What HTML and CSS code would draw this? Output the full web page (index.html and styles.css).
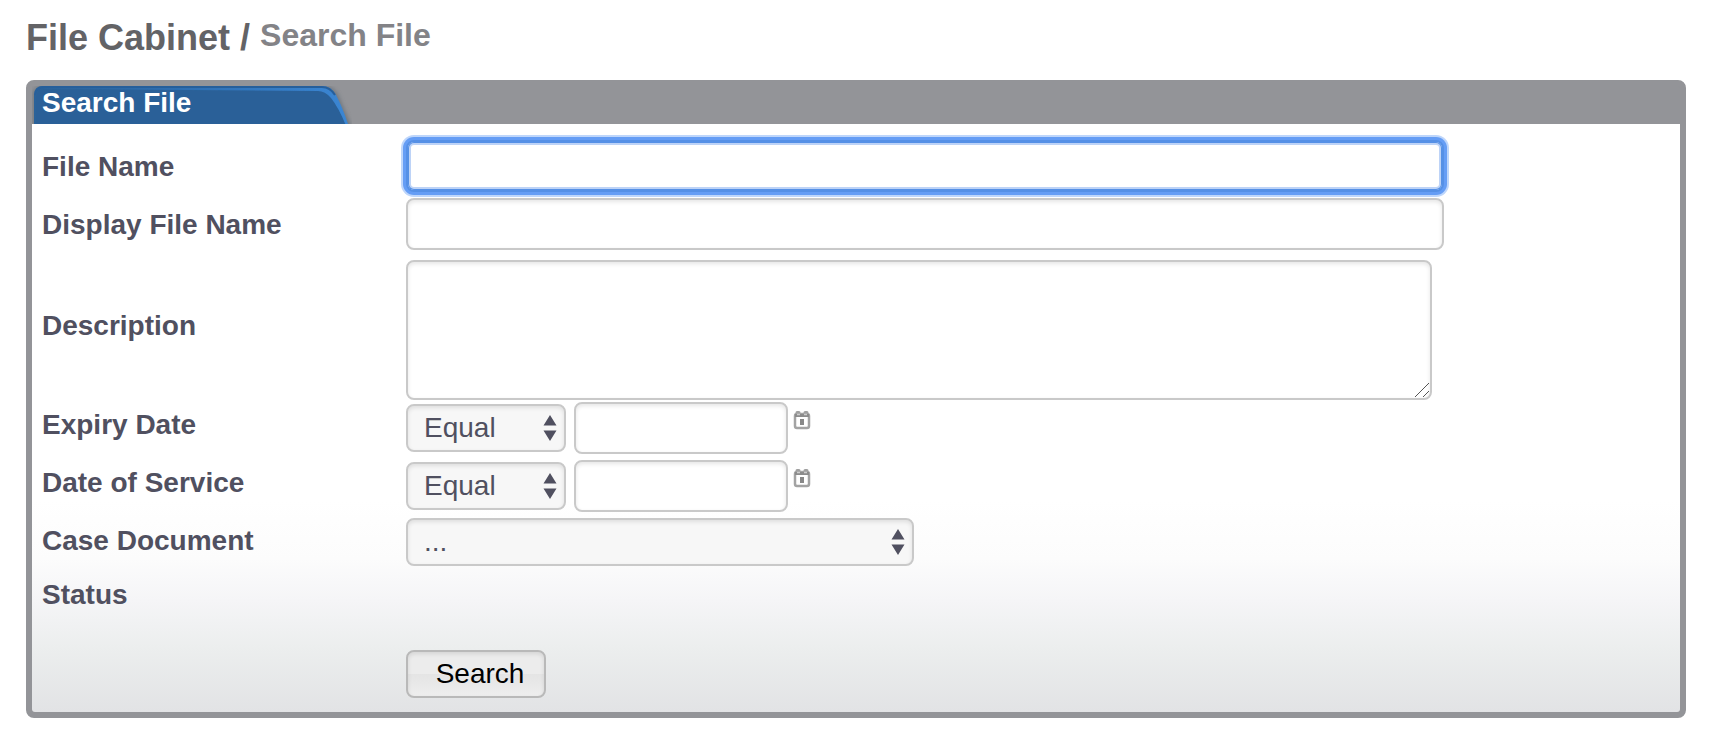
FILE: index.html
```html
<!DOCTYPE html>
<html lang="en">
<head>
  <meta charset="UTF-8" />
  <title>File Cabinet - Search File</title>
  <link rel="stylesheet" href="styles.css">
</head>

<body>
  <h1 class="page-title">File Cabinet / <span class="sub">Search File</span></h1>

  <div class="panel">
    <div class="panel-head">
      <svg class="tab-bg" width="320" height="38" viewBox="0 0 320 38">
        <defs>
          <linearGradient id="edge" x1="0" x2="1" y1="0" y2="0">
            <stop offset="0" stop-color="#2a6299" />
            <stop offset="0.5" stop-color="#2f70b4" />
            <stop offset="1" stop-color="#3b86d3" />
          </linearGradient>
          <filter id="soft" x="-5%" y="-20%" width="110%" height="140%">
            <feGaussianBlur stdDeviation="2" />
          </filter>
          <filter id="smooth" x="-5%" y="-20%" width="110%" height="140%">
            <feGaussianBlur stdDeviation="0.6" />
          </filter>
        </defs>
        <path d="M1 42V9Q1 0 10 0H292Q301 0 306 9L320 42Z" fill="#5f6972" opacity="0.7" filter="url(#soft)" />
        <path d="M2 38V9Q2 0 11 0H290Q299 0 304 9Q310 20 316 38Z" fill="url(#edge)" />
        <path d="M3 9Q4 1 12 1H290Q298 1 303 9" fill="none" stroke="#275f9b" stroke-width="2" filter="url(#smooth)" />
        <path d="M4 42V10Q4 3 12 3L286 5Q293 5 299 12Q307 22 315 42Z" fill="#2a6198" filter="url(#smooth)" />
      </svg>
      <h2 class="tab-title">Search File</h2>
    </div>

    <form class="panel-body">
      <div class="row">
        <label for="fileName">File Name</label>
        <input type="text" id="fileName" class="field wide active" />
      </div>

      <div class="row">
        <label for="displayName">Display File Name</label>
        <input type="text" id="displayName" class="field wide" />
      </div>

      <div class="row row-text">
        <label for="description">Description</label>
        <textarea id="description" class="field"></textarea>
      </div>

      <div class="row row-date">
        <label for="expiryDate">Expiry Date</label>
        <div class="controls">
          <span class="select">
            <select aria-label="Expiry date comparison">
              <option>Equal</option>
              <option>Before</option>
              <option>After</option>
            </select>
            <svg width="14" height="28" viewBox="0 0 14 28"><path d="M7 1L13.500 11.500H0.500ZM0.500 16.500H13.500L7 27Z" /></svg>
          </span>
          <input type="text" id="expiryDate" class="field date" />
          <button type="button" class="calendar" aria-label="Pick expiry date">
            <svg width="18" height="20" viewBox="0 0 18 20">
              <rect x="2" y="4" width="14" height="14" rx="2" fill="#fff" stroke="#a3a3a3" stroke-width="2.500" />
              <path d="M2 5.500H16" stroke="#8c8c8c" stroke-width="3" />
              <path d="M4 2.500H6M12 2.500H14" stroke="#a0a0a0" stroke-width="3" stroke-linecap="round" />
              <path d="M4 4.500H7M11 4.500H14" stroke="#ccc" stroke-width="1.500" />
              <rect x="7" y="9" width="4" height="6" fill="#888" />
            </svg>
          </button>
        </div>
      </div>

      <div class="row row-date">
        <label for="serviceDate">Date of Service</label>
        <div class="controls">
          <span class="select">
            <select aria-label="Date of service comparison">
              <option>Equal</option>
              <option>Before</option>
              <option>After</option>
            </select>
            <svg width="14" height="28" viewBox="0 0 14 28"><path d="M7 1L13.500 11.500H0.500ZM0.500 16.500H13.500L7 27Z" /></svg>
          </span>
          <input type="text" id="serviceDate" class="field date" />
          <button type="button" class="calendar" aria-label="Pick date of service">
            <svg width="18" height="20" viewBox="0 0 18 20">
              <rect x="2" y="4" width="14" height="14" rx="2" fill="#fff" stroke="#a3a3a3" stroke-width="2.500" />
              <path d="M2 5.500H16" stroke="#8c8c8c" stroke-width="3" />
              <path d="M4 2.500H6M12 2.500H14" stroke="#a0a0a0" stroke-width="3" stroke-linecap="round" />
              <path d="M4 4.500H7M11 4.500H14" stroke="#ccc" stroke-width="1.500" />
              <rect x="7" y="9" width="4" height="6" fill="#888" />
            </svg>
          </button>
        </div>
      </div>

      <div class="row row-case">
        <label for="caseDocument">Case Document</label>
        <span class="select select-wide">
          <select id="caseDocument">
            <option>...</option>
          </select>
          <svg width="14" height="28" viewBox="0 0 14 28"><path d="M7 1L13.500 11.500H0.500ZM0.500 16.500H13.500L7 27Z" /></svg>
        </span>
      </div>

      <div class="row row-status">
        <span class="label">Status</span>
      </div>

      <div class="row row-submit">
        <button type="submit" class="search">Search</button>
      </div>
    </form>
  </div>
</body>
</html>
```

FILE: styles.css
```css
* {
  box-sizing: border-box;
}

body {
  margin: 0;
  padding: 16px 28px 34px 26px;
  background: #fff;
  color: #505060;
  font-family: Arial, "Liberation Sans", sans-serif;
  font-size: 28px;
  line-height: 32px;
}

.page-title {
  display: flex;
  gap: 10px;
  height: 64px;
  margin: 0;
  color: #636366;
  font-size: 36px;
  line-height: 44px;
}

.page-title .sub {
  color: #838387;
  font-size: 32px;
  line-height: 38px;
}

.panel {
  border: 6px solid #939498;
  border-radius: 8px;
  background: #939498;
}

.panel-head {
  position: relative;
  height: 38px;
}

.tab-bg {
  position: absolute;
  top: 0;
  left: 0;
}

.tab-title {
  position: relative;
  margin: 0;
  padding-left: 10px;
  color: #fff;
  font-size: 28px;
  line-height: 34px;
}

.panel-body {
  padding: 13px 236px 14px 10px;
  border-radius: 0 0 3px 3px;
  background: linear-gradient(#fff 64%, #fcfcfc 74%, #f5f5f7 81%, #eceeee 89%, #e2e3e5 100%);
}

.row {
  display: grid;
  grid-template-columns: 364px 1fr;
  align-items: center;
  min-height: 58px;
}

label,
.label {
  padding-top: 2px;
  font-weight: bold;
}

.field,
select,
.search {
  margin: 0;
  border: 2px solid #c9c9c9;
  border-radius: 8px;
  box-shadow: inset 0 2px 4px rgba(0, 0, 0, 0.1);
  font: inherit;
}

.field {
  height: 52px;
  padding: 0 8px;
  background: #fff;
  color: #505060;
  outline: none;
}

.wide {
  width: 100%;
}

.active {
  border-color: #5590e6;
  box-shadow: inset 0 0 0 1px #5590e6, inset 0 0 0 3px #bdd3f7, 0 0 0 3px #659df5, 0 0 0 5px #bed6fb;
}

.row-text {
  min-height: 147px;
}

.row-text label {
  padding: 0 0 2px;
}

textarea.field {
  align-self: end;
  width: calc(100% - 12px);
  height: 140px;
  resize: vertical;
}

/* two diagonal grip lines */
textarea::-webkit-resizer {
  background: linear-gradient(135deg, transparent 47%, #555 47%, #555 53%, transparent 53%, transparent 76%, #555 76%, #555 82%, transparent 82%) 0 0 / 14px 14px no-repeat;
}

.row-date label {
  padding: 0 0 8px;
}

.controls {
  display: flex;
  align-items: center;
  align-self: start;
  padding-top: 2px;
}

.select {
  position: relative;
  width: 160px;
  height: 48px;
}

.select-wide {
  align-self: start;
  width: 508px;
  margin-top: 2px;
}

select {
  display: block;
  width: 100%;
  height: 48px;
  padding: 0 36px 0 16px;
  background: #f7f7f7;
  color: #505060;
  appearance: none;
}

.select svg {
  position: absolute;
  top: 10px;
  right: 9px;
  fill: #505060;
  pointer-events: none;
}

.date {
  width: 214px;
  margin-left: 8px;
}

.calendar {
  align-self: flex-start;
  margin: 8px 0 0 5px;
  padding: 0;
  border: 0;
  background: none;
  line-height: 0;
}

.row-case {
  min-height: 54px;
}

.row-case label {
  padding: 0 0 4px;
}

.row-status {
  min-height: 48px;
}

.row-submit {
  padding-top: 32px;
}

.search {
  grid-column: 2;
  justify-self: start;
  width: 140px;
  height: 48px;
  padding: 0 0 0 8px;
  border-color: #b9b9b9;
  background: linear-gradient(#ececec 50%, #e4e4e4 50%, #eee);
  color: #000;
}
```
